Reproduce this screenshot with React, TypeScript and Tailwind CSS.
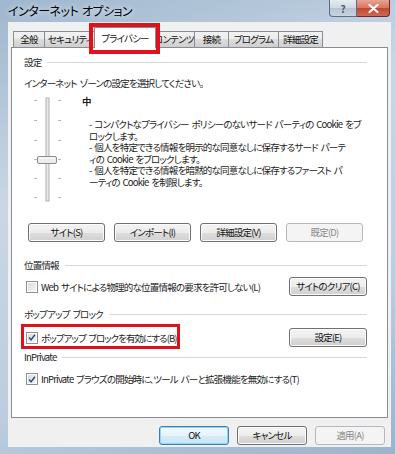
import React from 'react';

const jp = "font-['Noto_Sans_CJK_JP','Noto_Sans',sans-serif] [font-feature-settings:'palt']";

const Btn: React.FC<{ label: string; w?: string; disabled?: boolean; def?: boolean }> = ({ label, w = 'w-[77px]', disabled, def }) => {
    const look = disabled
        ? 'border-[#b5b9bc] bg-[#f4f4f4] text-[#8a8a8a]'
        : def
            ? 'border-[#3c7fb1] bg-[linear-gradient(#f4fafe,#e6f4fc_50%,#d6ecf8_50%,#c9e5f6)] shadow-[inset_0_0_0_1px_#8fd6f6] text-[#111]'
            : 'border-[#707070] bg-[linear-gradient(#f4f4f4,#ececec_50%,#dedede_50%,#d0d0d0)] shadow-[inset_0_0_0_1px_#fbfbfb] text-[#111]';
    return (
        <div className={`${w} h-[19px] shrink-0 rounded-[3px] border flex items-center justify-center whitespace-nowrap leading-none ${look}`}>
            {label}
        </div>
    );
};

const Check: React.FC<{ on?: boolean }> = ({ on }) => (
    <div className="w-[12px] h-[12px] shrink-0 border border-[#8e8f8f] bg-white p-[1px]">
        <div className="w-full h-full bg-[linear-gradient(135deg,#dcdcdc,#f6f6f6)] flex items-center justify-center">
            {on && (
                <svg width="9" height="9" viewBox="0 0 9 9">
                    <path d="M1.2 4.6 L3.4 7.2 L7.8 1.4" fill="none" stroke="#2c4a86" strokeWidth="1.7" />
                </svg>
            )}
        </div>
    </div>
);

// group caption with the thin line running to the right
const Group: React.FC<{ title: string; className?: string }> = ({ title, className = '' }) => (
    <div className={`flex items-center h-[14px] ${className}`}>
        <span className="text-[#1e1e1e] whitespace-nowrap">{title}</span>
        <div className="flex-1 h-px bg-[#d3d9de] ml-[6px]" />
    </div>
);

const Slider = () => {
    const ticks = [105, 125, 145, 164, 183, 202];
    return (
        <svg width="32" height="110" viewBox="0 0 32 110" className="shrink-0">
            {ticks.map(t => (
                <g key={t} stroke="#b9b9b9" strokeWidth="1">
                    <line x1="2" x2="5" y1={t - 99.5} y2={t - 99.5} />
                    <line x1="26" x2="29" y1={t - 99.5} y2={t - 99.5} />
                </g>
            ))}
            <rect x="14" y="3" width="3" height="103" fill="#e7eaea" stroke="#b0b0b0" strokeWidth="1" />
            <rect x="5.5" y="61.5" width="19" height="7" rx="1.5" fill="#ececec" stroke="#8d8d8d" />
            <line x1="7" x2="23" y1="63" y2="63" stroke="#ffffff" />
        </svg>
    );
};

const tabs = ['全般', 'セキュリティ', 'プライバシー', 'コンテンツ', '接続', 'プログラム', '詳細設定'];
const tabW = ['w-[32px]', 'w-[52px]', 'w-[62px]', 'w-[42px]', 'w-[35px]', 'w-[51px]', 'w-[45px]'];

export default function App() {
    return (
        <div className={`relative w-[395px] h-[454px] overflow-hidden bg-[linear-gradient(160deg,#9fb7cf,#c9d7e5_35%,#bccddf_70%,#9bb3cc)] text-[9.5px] tracking-[-0.8px] [word-spacing:1.5px] ${jp}`}>
            {/* title bar */}
            <div className="h-[22px] flex items-start justify-between">
                <div className="pl-[8px] pt-[4px] text-[12px] tracking-[-0.5px] leading-[14px] text-black [text-shadow:0_0_6px_#ffffff]">インターネット オプション</div>
                <div className="flex mr-[5px]">
                    <div className="w-[28px] h-[17px] rounded-bl-[4px] border border-t-0 border-[#5d6e83] bg-[linear-gradient(#e5ebf1,#cfd9e3_50%,#b6c4d3_50%,#c7d3df)] flex items-center justify-center text-[10px] tracking-normal font-bold text-[#4a5a6e]">?</div>
                    <div className="w-[33px] h-[17px] rounded-br-[4px] border border-t-0 border-l-0 border-[#6b2b22] bg-[linear-gradient(#e8a493,#d7745f_50%,#c4442c_50%,#d06a52)] flex items-center justify-center">
                        <svg width="11" height="9" viewBox="0 0 11 9">
                            <path d="M1.5 1 L9.5 8 M9.5 1 L1.5 8" stroke="#ffffff" strokeWidth="2.2" strokeLinecap="round" />
                        </svg>
                    </div>
                </div>
            </div>

            {/* dialog body */}
            <div className="ml-[8px] mr-[4px] h-[425px] bg-[#f0f0f0] pt-[5px] flex flex-col">
                {/* tab strip */}
                <div className="flex items-end h-[20px] pl-[6px]">
                    {tabs.map((t, i) =>
                        i === 2 ? (
                            <div key={t} className={`${tabW[i]} relative z-10 -mx-[2px] -mb-px h-[21px] border border-b-0 border-[#898c95] bg-white flex items-center justify-center text-[#111] whitespace-nowrap`}>{t}</div>
                        ) : (
                            <div key={t} className={`${tabW[i]} -ml-px h-[16px] border border-b-0 border-[#898c95] bg-[linear-gradient(#f2f2f2,#ebebeb_50%,#dddddd_50%,#cfcfcf)] flex items-center justify-center text-[#111] whitespace-nowrap overflow-hidden`}>{t}</div>
                        )
                    )}
                </div>

                {/* tab panel */}
                <div className="mx-[3px] h-[371px] border border-[#898c95] bg-white pl-[12px] pr-[20px] pt-[7px] text-[#1a1a1a] leading-[14px]">
                    <Group title="設定" />
                    <div className="mt-[7px] h-[14px] whitespace-nowrap">インターネット ゾーンの設定を選択してください。</div>

                    <div className="mt-[5px] flex h-[110px]">
                        <div className="ml-[8px]">
                            <Slider />
                        </div>
                        <div className="ml-[18px]">
                            <div className="h-[12px] leading-[12px] font-bold">中</div>
                            <div className="mt-[12px] ml-[7px] leading-[11.6px] whitespace-nowrap">
                                <div>- コンパクトなプライバシー ポリシーのないサード パーティの Cookie をブ</div>
                                <div>ロックします。</div>
                                <div>- 個人を特定できる情報を明示的な同意なしに保存するサード パーテ</div>
                                <div>ィの Cookie をブロックします。</div>
                                <div>- 個人を特定できる情報を暗黙的な同意なしに保存するファースト パ</div>
                                <div>ーティの Cookie を制限します。</div>
                            </div>
                        </div>
                    </div>

                    <div className="mt-[18px] ml-[4px] flex gap-[9px]">
                        <Btn label="サイト(S)" />
                        <Btn label="インポート(I)" />
                        <Btn label="詳細設定(V)" />
                        <Btn label="既定(D)" disabled />
                    </div>

                    <Group title="位置情報" className="mt-[16px]" />
                    <div className="mt-[5px] h-[19px] flex items-center">
                        <div className="ml-[2px] flex items-center gap-[3px] flex-1 whitespace-nowrap">
                            <Check />
                            <span>Web サイトによる物理的な位置情報の要求を許可しない(L)</span>
                        </div>
                        <Btn label="サイトのクリア(C)" w="w-[78px]" />
                    </div>

                    <Group title="ポップアップ ブロック" className="mt-[11px]" />
                    <div className="mt-[7px] h-[19px] flex items-center">
                        <div className="ml-[2px] flex items-center gap-[3px] flex-1 whitespace-nowrap">
                            <Check on />
                            <span className="tracking-[-0.95px]">ポップアップ ブロックを有効にする(B)</span>
                        </div>
                        <Btn label="設定(E)" w="w-[78px]" />
                    </div>

                    <Group title="InPrivate" className="mt-[3px]" />
                    <div className="mt-[8px] h-[14px] ml-[2px] flex items-center gap-[3px] whitespace-nowrap">
                        <Check on />
                        <span>InPrivate ブラウズの開始時に、ツール バーと拡張機能を無効にする(T)</span>
                    </div>
                </div>

                {/* dialog buttons */}
                <div className="mt-[8px] pr-[6px] flex justify-end gap-[8px]">
                    <Btn label="OK" w="w-[70px]" def />
                    <Btn label="キャンセル" w="w-[70px]" />
                    <Btn label="適用(A)" w="w-[70px]" disabled />
                </div>
            </div>

            {/* red annotation boxes */}
            <div className="absolute left-[89px] top-[23px] w-[71px] h-[31px] border-[4px] border-[#e3101c] z-20" />
            <div className="absolute left-[21px] top-[324px] w-[159px] h-[25px] border-[3px] border-[#e3101c] z-20" />
        </div>
    );
}
